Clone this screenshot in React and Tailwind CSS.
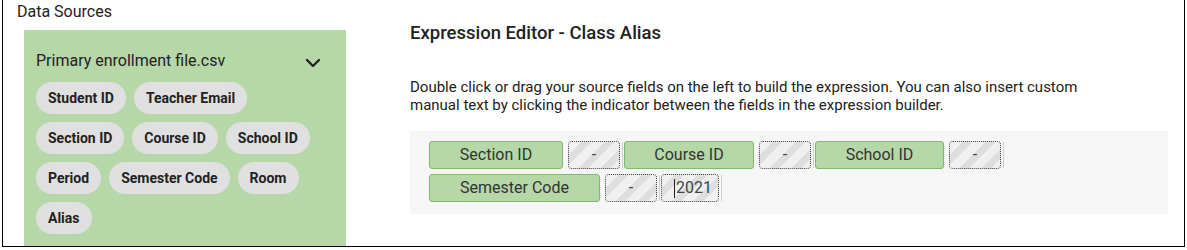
import React from "react";
import { ChevronDown } from "lucide-react";

const fields = [
  "Student ID",
  "Teacher Email",
  "Section ID",
  "Course ID",
  "School ID",
  "Period",
  "Semester Code",
  "Room",
  "Alias",
];

const rows = [
  [
    { type: "field", label: "Section ID", w: "w-[134px]" },
    { type: "sep", label: "-" },
    { type: "field", label: "Course ID", w: "w-[130px]" },
    { type: "sep", label: "-" },
    { type: "field", label: "School ID", w: "w-[129px]" },
    { type: "sep", label: "-" },
  ],
  [
    { type: "field", label: "Semester Code", w: "w-[171px]" },
    { type: "sep", label: "-" },
    { type: "text", label: "2021" },
  ],
];

const stripes =
  "bg-[repeating-linear-gradient(135deg,#f0f0f0_0px,#f0f0f0_9px,#dedede_9px,#dedede_16px)]";

const Sep = ({ label, cursor, wide }) => (
  <div className="flex items-center mr-[1px]">
    <div
      className={`${wide ? "w-[58px] justify-start pl-[12px]" : "w-[52px] justify-center"} h-[28px] flex items-center rounded-[4px] border border-dotted border-[#444] text-[16px] text-[#444] ${stripes}`}
    >
      {cursor && <span className="w-px h-[19px] bg-[#222] mr-[1px]" />}
      {label}
    </div>
    <span className="ml-[2px] w-px h-[26px] bg-[#d0d0d0]" />
  </div>
);

const App = () => {
  return (
    <div
      className="w-[1187px] h-[250px] bg-white text-[#222]"
      style={{ fontFamily: "Roboto, 'Liberation Sans', sans-serif" }}
    >
      <div className="ml-[2px] w-[1183px] h-[247px] border-l border-r border-b border-black flex">
        {/* left column */}
        <div className="w-[407px] flex flex-col">
          <div className="pl-[14px] pt-[2px] h-[30px] text-[16px] leading-[20px]">Data Sources</div>
          <div className="ml-[21px] w-[322px] flex-1 bg-[#b6d7a8] px-[12px] pt-[21px]">
            <div className="flex items-center justify-between h-[20px] pr-[9px]">
              <span className="text-[16px] leading-[20px] text-[#222]">Primary enrollment file.csv</span>
              <ChevronDown size={24} strokeWidth={2.4} className="text-[#222] mt-[3px]" />
            </div>
            <div className="mt-[11px] flex flex-wrap gap-[8px]">
              {fields.map((f) => (
                <span
                  key={f}
                  className="h-[32px] px-[12px] rounded-full bg-[#e0e0e0] flex items-center text-[14px] font-bold text-[#222]"
                >
                  {f}
                </span>
              ))}
            </div>
          </div>
        </div>

        {/* right column */}
        <div className="flex-1 pr-[16px] pt-[21px]">
          <h3 className="text-[18.5px] leading-[24px] font-medium text-[#222]">Expression Editor - Class Alias</h3>
          <p className="mt-[33px] max-w-[700px] text-[15px] leading-[18px] text-[#222]">
            Double click or drag your source fields on the left to build the expression. You can also insert custom
            manual text by clicking the indicator between the fields in the expression builder.
          </p>
          <div className="mt-[17px] h-[83px] bg-[#f6f6f6] pl-[19px] pt-[10px] flex flex-col gap-[5px]">
            {rows.map((row, r) => (
              <div key={r} className="flex">
                {row.map((item, i) => {
                  if (item.type === "field")
                    return (
                      <div
                        key={i}
                        className={`${item.w} h-[28px] mr-[5px] flex items-center justify-center rounded-[3px] border border-[#7fbc6a] bg-[#b6d7a8] text-[16px] text-[#333]`}
                      >
                        {item.label}
                      </div>
                    );
                  if (item.type === "sep") return <Sep key={i} label={item.label} />;
                  return <Sep key={i} label={item.label} cursor wide />;
                })}
              </div>
            ))}
          </div>
        </div>
      </div>
    </div>
  );
};

export default App;
